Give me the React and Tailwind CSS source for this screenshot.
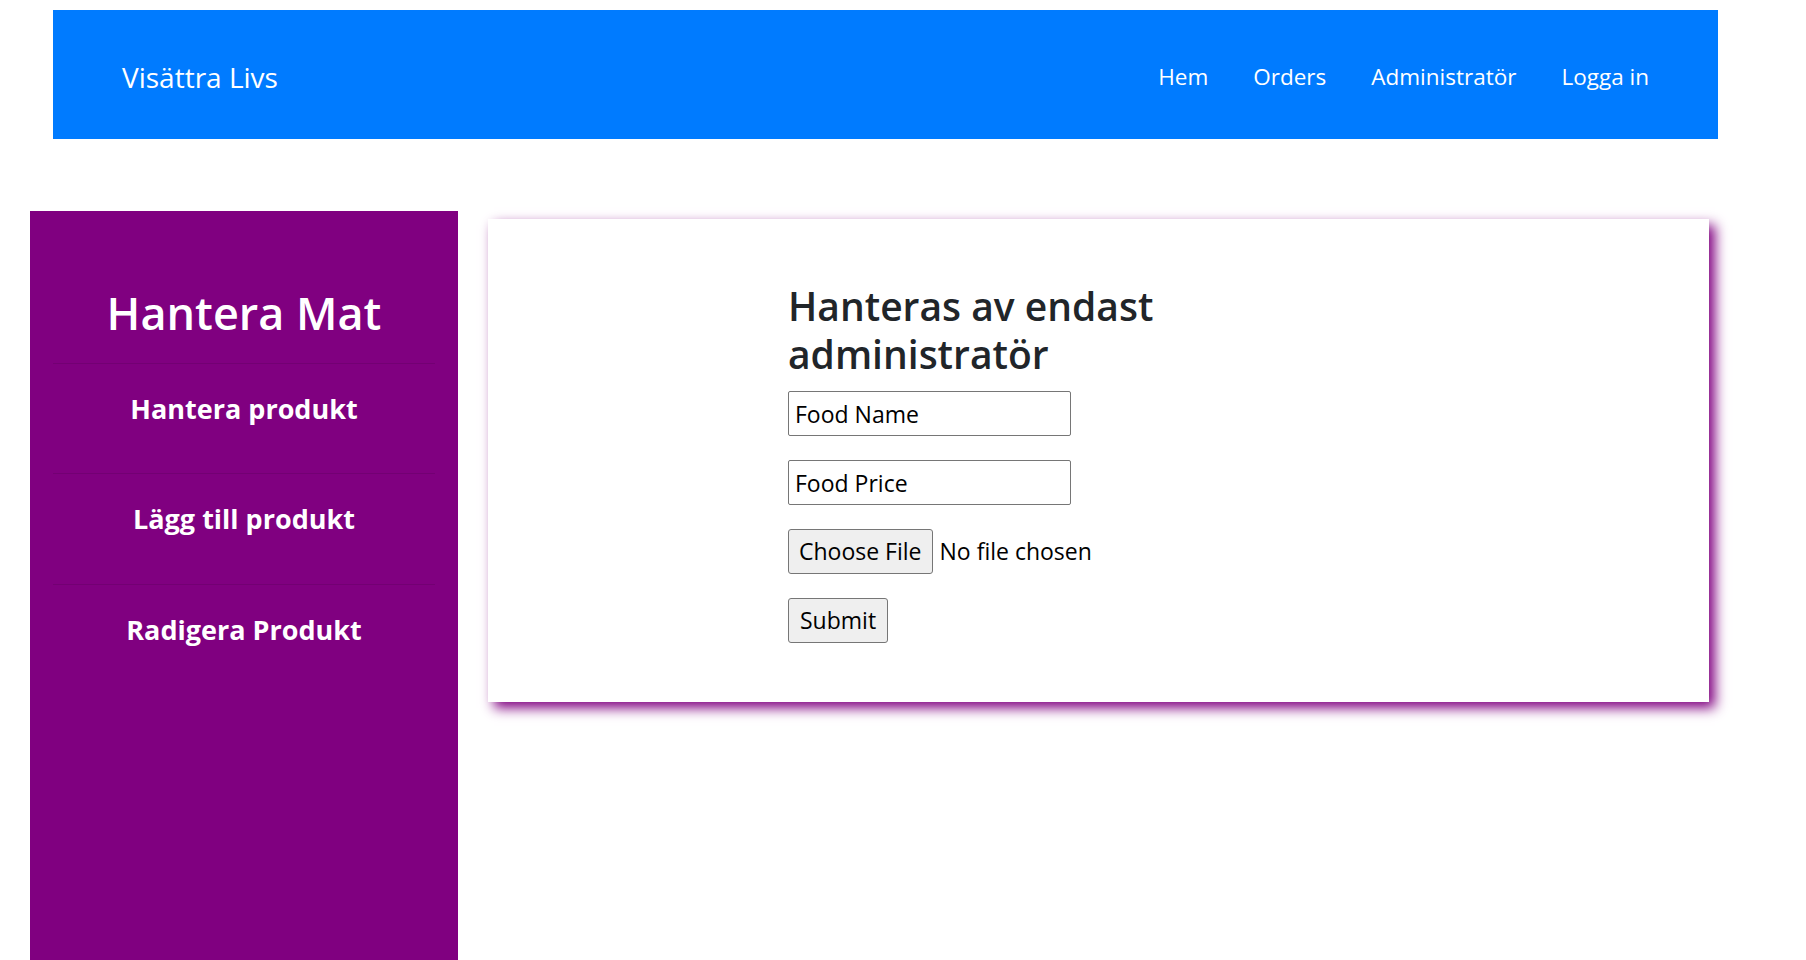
import React from 'react';

const navLinks = ['Hem', 'Orders', 'Administratör', 'Logga in'];
const sideItems = ['Hantera produkt', 'Lägg till produkt', 'Radigera Produkt'];

export default function App() {
  return (
    <div className="min-h-screen bg-white font-['Open_Sans',sans-serif] text-[#212529] overflow-hidden">
      {/* Top navbar */}
      <nav className="ml-[53px] mt-[10px] w-[1665px] h-[129px] bg-[#007bff] flex items-center justify-between px-[69px] pt-[5px]">
        <a className="text-[28px] text-white">Visättra Livs</a>
        <ul className="flex items-center gap-[45px]">
          {navLinks.map((l) => (
            <li key={l} className="text-[22.5px] text-white">{l}</li>
          ))}
        </ul>
      </nav>

      <div className="flex items-start mt-[72px]">
        {/* Sidebar */}
        <aside className="ml-[30px] w-[428px] h-[760px] bg-[#800080] text-white px-[23px] pt-[75px]">
          <h1 className="text-[45px] font-semibold text-center leading-[1.2] pb-[23px]">Hantera Mat</h1>
          {sideItems.map((item) => (
            <div key={item} className="border-t border-black/10 pt-[29px] pb-[48px] text-center">
              <span className="text-[27px] font-bold leading-[1.2]">{item}</span>
            </div>
          ))}
        </aside>

        {/* Card */}
        <section className="ml-[30px] mt-[8px] w-[1221px] h-[483px] bg-white shadow-[6px_6px_12px_#800080] pl-[300px] pt-[63px]">
          <h2 className="text-[39px] font-semibold leading-[1.22] w-[420px] mb-[14px]">Hanteras av endast administratör</h2>
          <form className="flex flex-col gap-[24px] items-start text-[23px] text-black">
            <input
              type="text"
              defaultValue="Food Name"
              className="w-[283px] h-[45px] border border-[#767676] rounded-[2px] px-[6px] text-black outline-none"
            />
            <input
              type="text"
              defaultValue="Food Price"
              className="w-[283px] h-[45px] border border-[#767676] rounded-[2px] px-[6px] text-black outline-none"
            />
            <div className="flex items-center gap-[7px]">
              <button type="button" className="h-[45px] px-[10px] bg-[#efefef] border border-[#767676] rounded-[3px]">Choose File</button>
              <span>No file chosen</span>
            </div>
            <button type="button" className="h-[45px] px-[11px] bg-[#efefef] border border-[#767676] rounded-[3px]">Submit</button>
          </form>
        </section>
      </div>
    </div>
  );
}
